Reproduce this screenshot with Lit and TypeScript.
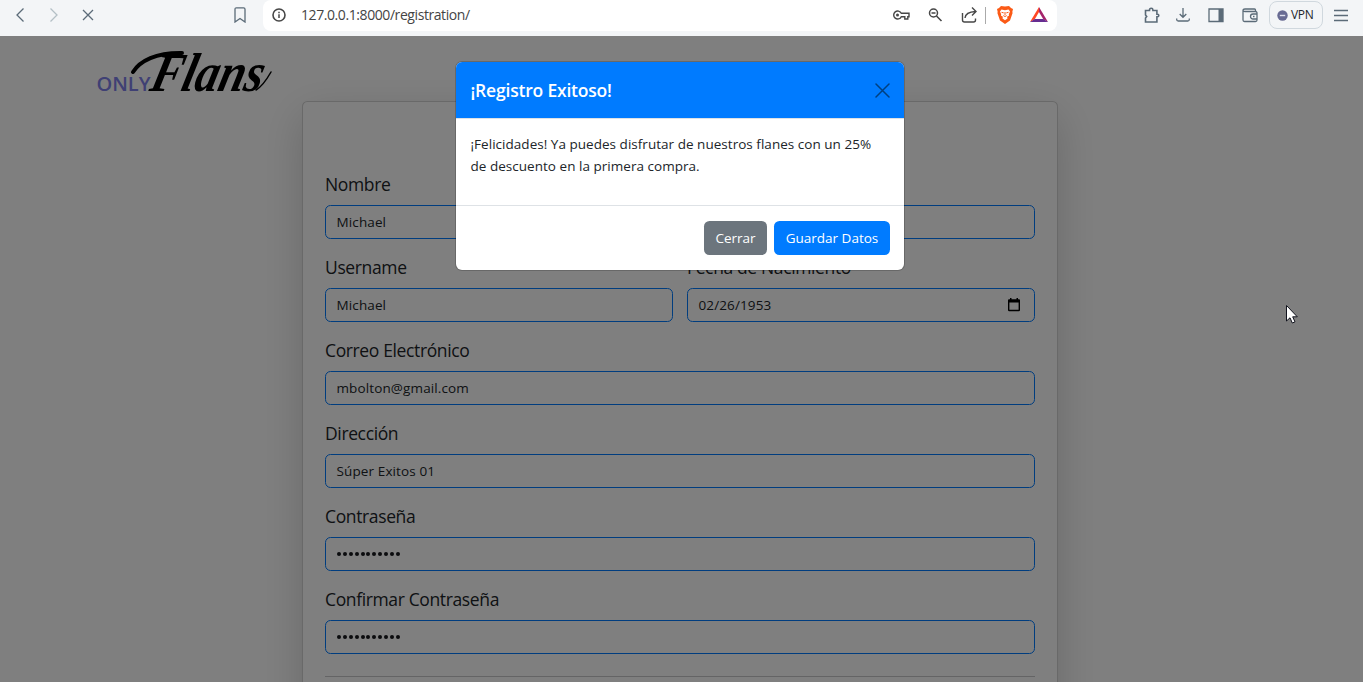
import { LitElement, html, css, svg } from "lit";
import { customElement } from "lit/decorators.js";

@customElement("browser-bar")
class BrowserBar extends LitElement {
  static styles = css`
    :host { display: flex; height: 36px; background: #f3f5f7; color: #5b6b78; box-sizing: border-box; }
    svg { display: block; fill: none; stroke: currentColor; stroke-width: 1.3; flex: none; }
    .nav { display: flex; width: 263px; height: 30px; align-items: center; padding-left: 12px; box-sizing: border-box; flex: none; }
    .gap { margin-left: 18px; }
    .dim { color: #b4c0c6; }
    .mark { margin-left: 136px; }
    .address { display: flex; align-items: center; width: 794px; height: 31px; background: #fff; border-radius: 8px; color: #474747; padding: 0 9px 1px 8px; box-sizing: border-box; flex: none; }
    .url { font: 14px/20px "Open Sans", sans-serif; letter-spacing: -0.42px; margin-left: 14px; flex: 1; color: #444; white-space: nowrap; }
    .icons { display: flex; align-items: center; }
    .share { margin-left: 17px; }
    .zoom { margin-left: 17px; }
    .sep { width: 1px; height: 17px; background: #aaa; margin: 0 10px 0 7px; }
    .tri { margin-left: 16px; }
    .tools { display: flex; align-items: center; height: 30px; margin-left: auto; padding-right: 14px; }
    .t2 { margin-left: 14px; }
    .t3 { margin-left: 16px; }
    .vpn { display: flex; align-items: center; gap: 3px; width: 54px; height: 28px; box-sizing: border-box; border: 1px solid #d0d8de; border-radius: 8px; margin: 0 10px 0 10px; padding-left: 7px; font: 12px/18px "Open Sans", sans-serif; color: #22252b; letter-spacing: -0.3px; }
  `;
  render() {
    return html`
      <div class="nav">
        <svg width="16" height="16"><path d="M11.5 1.5 5 8l6.500 6.500" /></svg>
        <svg class="gap dim" width="16" height="16"><path d="M4.500 1.500 11 8l-6.500 6.500" /></svg>
        <svg class="gap" width="16" height="16"><path d="M3 3l10 10M13 3 3 13" /></svg>
        <svg class="mark" width="16" height="16"><path d="M3 2.200Q3 .8 4.400.8h7.200Q13 .8 13 2.200V15l-5-3.500L3 15Z" /></svg>
      </div>
      <div class="address">
        <svg width="16" height="16"><circle cx="8" cy="8" r="6" stroke-width="1.600" /><path d="M8 7.200V11M8 4.700v1.500" stroke-width="1.500" /></svg>
        <div class="url">127.0.0.1:8000/registration/</div>
        <div class="icons">
          <svg width="18" height="16"><path d="M9.300 6.300H17v3.400h-1.200V12h-3V9.700H9.300A4 4 0 1 1 9.300 6.300Z" stroke-width="1.400" /><circle cx="5.500" cy="8" r="1.500" fill="currentColor" stroke="none" /></svg>
          <svg class="zoom" width="16" height="16"><circle cx="6.500" cy="6" r="4" stroke-width="1.500" /><path d="m9.500 9 5 5M4.500 6h4" stroke-width="1.600" /></svg>
          <svg class="share" width="18" height="18"><path d="M2.500 7v7q0 2 2 2h9q2 0 2-2v-1.500M5 12q.5-6 10.500-6.500M12 1.500l4 4-4 4" stroke-width="1.400" /></svg>
          <div class="sep"></div>
          <svg width="18" height="20" stroke="none"><path stroke="none" fill="#fb5a16" d="m5 1 4 .4L13 1l2 2 2 1-.7 3 .3 1-2.600 7.500L9 19l-5-3.500L1.400 8l.3-1L1 4l2-1Z" /><path stroke="none" fill="#fff" d="m5.500 4.500 3.500.7 3.500-.7 1.500 2-1.200 2.700.3 1.300-2 1.300L11.500 13.500 9 15.200l-2.500-1.700.4-1.700-2-1.300.3-1.300L4 6.500Z" /><path stroke="#fb5a16" stroke-width="1" d="m5.500 7.300 2.200.6M12.500 7.300l-2.200.6M9 7v3M7.300 10.600 9 11.500l1.700-.9" /></svg>
          <svg class="tri" width="18" height="18"><path stroke="none" fill="#ff4724" d="M9 1v5L4.800 13.200 0 16Z" /><path stroke="none" fill="#a5246b" d="M9 1v5l4.300 7.200L18 16Z" /><path stroke="none" fill="#662d91" d="M0 16l4.800-3h8.500l4.700 3Z" /></svg>
        </div>
      </div>
      <div class="tools">
        <svg width="18" height="18"><path d="M2.500 4.500h4V4a1.700 1.700 0 0 1 3.400 0v.5h4v3.700h.6a1.300 1.300 0 0 1 0 2.600h-.6v5.200H2.500v-4l1.200-1.500L2.500 9Z" stroke-width="1.600" /></svg>
        <svg class="t2" width="16" height="16"><path d="M8 1v9M4.700 7 8 10.300 11.300 7M1.700 11.500v1q0 1.500 1.500 1.500h9.600q1.500 0 1.500-1.500v-1" /></svg>
        <svg class="t3" width="18" height="16"><path d="M2 2h14v12.500H2Z" /><path stroke="none" fill="currentColor" d="M11.500 2H16v12.500h-4.500Z" /></svg>
        <svg class="t3" width="18" height="18"><path d="M14.500 5.500V4q0-1-1-1H4Q2 3 2 4.500V14q0 1.500 1.500 1.500h11q1.500 0 1.500-1.500V7q0-1.500-1.500-1.500H4Q2 5.500 2 4.500M16 8h-4a2.500 2.500 0 0 0 0 5h4M12 10.500h1.500" /></svg>
        <div class="vpn"><svg width="11" height="11"><circle cx="5.500" cy="5.500" r="5.200" fill="#686b93" stroke="none" /><path d="M2.800 5.500h5.400" stroke="#dfe0ee" stroke-width="1.400" /></svg>VPN</div>
        <svg width="16" height="16"><path d="M1 3.500h14M1 8.500h14M1 13.500h14" /></svg>
      </div>`;
  }
}

@customElement("form-field")
class FormField extends LitElement {
  static properties = { label: {}, value: {}, kind: {} };
  declare label: string;
  declare value: string;
  declare kind: string;
  static styles = css`
    :host { display: block; flex: 1; }
    .label { height: 27px; margin-bottom: 7px; font: 400 17.500px/27px "Open Sans", sans-serif; letter-spacing: -0.37px; color: #212529; white-space: nowrap; }
    .box { display: flex; align-items: center; justify-content: space-between; height: 34px; box-sizing: border-box; border: 1px solid #007bff; border-radius: 5.500px; padding: 0 11px 0 10.500px; font: 400 13.500px/22px "Open Sans", sans-serif; letter-spacing: 0.12px; color: #212529; }
    .dots { display: flex; gap: 1.900px; padding: 0 1px 1px 0.5px; }
    .dot { width: 4px; height: 4px; border-radius: 50%; background: #16181c; }
    svg { display: block; margin-right: 2px; }
  `;
  render() {
    const content =
      this.kind === "password"
        ? html`<div class="dots">${Array.from({ length: 11 }, () => html`<div class="dot"></div>`)}</div>`
        : html`<span>${this.value}</span>`;
    return html`
      <div class="label">${this.label}</div>
      <div class="box">
        ${content}
        ${this.kind === "date"
          ? html`<svg width="14" height="14"><path fill="#000" fill-rule="evenodd" d="M3 0h1.500v1.300h5V0H11v1.300h1q1 0 1 1V12q0 1.200-1.200 1.200H2.200Q1 13.200 1 12V2.300q0-1 1-1h1ZM2.400 4.600v7.200h9.200V4.600Z" /></svg>`
          : ""}
      </div>`;
  }
}

@customElement("success-dialog")
class SuccessDialog extends LitElement {
  static styles = css`
    :host { display: flex; flex-direction: column; width: 450px; height: 210px; box-sizing: border-box; background: #fff; background-clip: padding-box; border: 1px solid rgba(0, 0, 0, 0.175); border-radius: 7px; overflow: hidden; font-family: "Open Sans", sans-serif; }
    .head { display: flex; align-items: center; justify-content: space-between; height: 56px; background: #007bff; border-bottom: 1px solid #dee2e6; padding: 0 14.500px; flex: none; }
    .title { font-size: 17.500px; line-height: 27px; font-weight: 600; color: #fff; letter-spacing: -0.2px; white-space: nowrap; }
    .body { flex: 1; padding: 14px 14.500px 0; font-size: 13.500px; font-weight: 400; letter-spacing: 0.03px; line-height: 22px; color: #212529; white-space: nowrap; }
    .foot { display: flex; justify-content: flex-end; gap: 7px; height: 49px; padding: 15px 14px 0; border-top: 1px solid #dee2e6; flex: none; box-sizing: content-box; }
    .btn { display: flex; align-items: center; justify-content: center; height: 34px; border-radius: 5.500px; color: #fff; font-size: 13.500px; font-weight: 500; white-space: nowrap; }
    .gray { width: 63px; background: #6c757d; }
    .blue { width: 116px; background: #007bff; }
    svg { display: block; }
  `;
  render() {
    return html`
      <div class="head">
        <div class="title">¡Registro Exitoso!</div>
        <svg width="15" height="15"><path d="M1 1l13 13M14 1 1 14" stroke="#004080" stroke-width="1.500" stroke-linecap="round" /></svg>
      </div>
      <div class="body">
        <div class="line1">¡Felicidades! Ya puedes disfrutar de nuestros flanes con un 25%</div>
        <div class="line2">de descuento en la primera compra.</div>
      </div>
      <div class="foot">
        <div class="btn gray">Cerrar</div>
        <div class="btn blue">Guardar Datos</div>
      </div>`;
  }
}

@customElement("app-root")
class AppRoot extends LitElement {
  static styles = css`
    :host { display: flex; flex-direction: column; width: 1363px; height: 682px; overflow: hidden; }
    .page { position: relative; flex: 1; min-height: 0; overflow: hidden; background: #fff; }
    .logo { display: block; margin: 0 0 -10px 90px; height: 75px; overflow: visible; }
    .only { font: 600 20px "Open Sans", sans-serif; fill: #7e80e8; }
    .flans { font: italic 700 55px "Liberation Serif", serif; fill: #000; }
    .card { width: 756px; height: 760px; box-sizing: border-box; margin-left: 302px; padding: 69px 22px 0; background: #fff; border: 1px solid rgba(0, 0, 0, 0.175); border-radius: 5.500px; box-shadow: 0 14px 43px rgba(0, 0, 0, 0.175); }
    .fields { display: flex; flex-direction: column; gap: 15px; }
    .row { display: flex; gap: 14px; }
    .rule { height: 1px; background: #c8c9ca; margin-top: 22px; }
    .backdrop { position: absolute; inset: 0; background: rgba(0, 0, 0, 0.5); display: flex; justify-content: center; align-items: flex-start; padding: 25px 3px 0 0; }
    .cursor { position: absolute; left: 1285px; top: 268px; }
  `;
  render() {
    return html`
      <browser-bar></browser-bar>
      <div class="page">
        <svg class="logo" width="220" height="75">
          ${svg`<text class="only" x="6.500" y="55" textLength="54" lengthAdjust="spacing">ONLY</text>
          <text class="flans" x="59" y="55" textLength="112" lengthAdjust="spacingAndGlyphs" transform="translate(13 0) skewX(-14)">Flans</text>
          <path d="M43 36C50 25 66 16.500 92 17" fill="none" stroke="#000" stroke-width="4" stroke-linecap="round"/>
          <path d="M166 54Q173 50 181 36" fill="none" stroke="#000" stroke-width="1.500" stroke-linecap="round"/>`}
        </svg>
        <div class="card">
          <div class="fields">
            <form-field label="Nombre" value="Michael"></form-field>
            <div class="row">
              <form-field label="Username" value="Michael"></form-field>
              <form-field label="Fecha de Nacimiento" value="02/26/1953" kind="date"></form-field>
            </div>
            <form-field label="Correo Electrónico" value="mbolton@gmail.com"></form-field>
            <form-field label="Dirección" value="Súper Exitos 01"></form-field>
            <form-field label="Contraseña" kind="password"></form-field>
            <form-field label="Confirmar Contraseña" kind="password"></form-field>
          </div>
          <div class="rule"></div>
        </div>
        <div class="backdrop"><success-dialog></success-dialog></div>
        <svg class="cursor" width="14" height="22"><path d="M1.500 1.500V17l3.500-3.200 2.300 5.200 2.700-1.100-2.300-5.100h4.600Z" fill="#fff" stroke="#10121c" /></svg>
      </div>`;
  }
}
